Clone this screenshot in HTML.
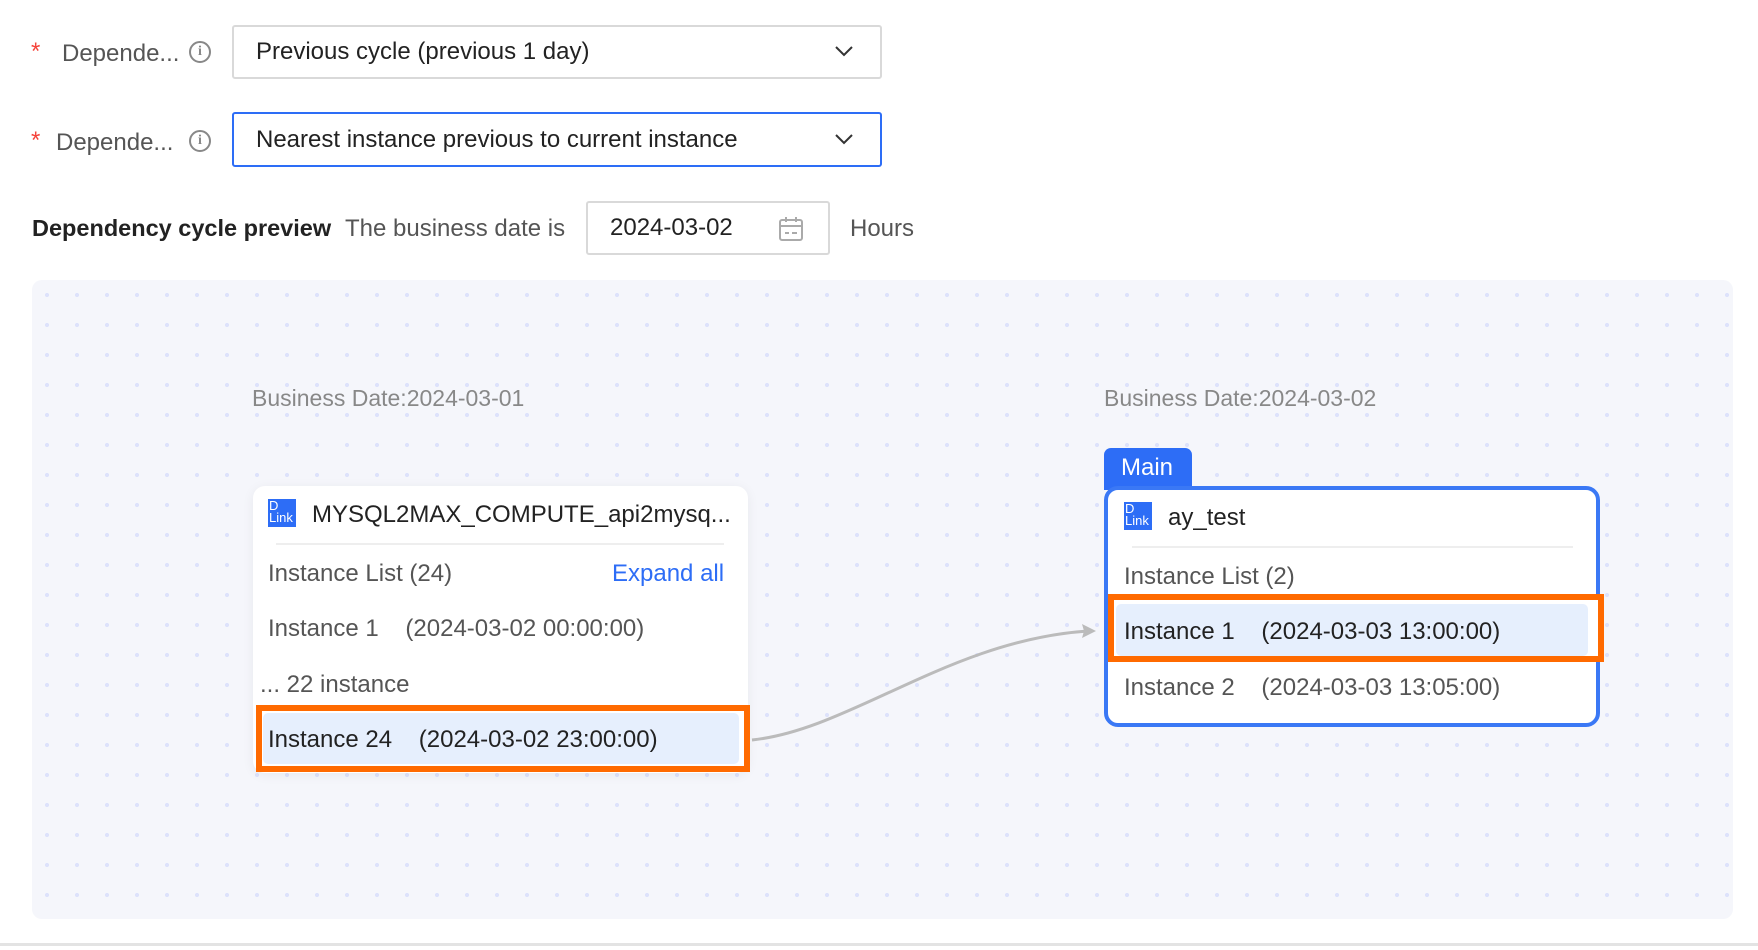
<!DOCTYPE html>
<html><head><meta charset="utf-8"><style>
*{box-sizing:border-box;margin:0;padding:0}
body{width:1758px;height:950px;background:#fff;font-family:"Liberation Sans",Arial,sans-serif;position:relative;overflow:hidden;color:#333}
.a{position:absolute}
.star{color:#f5433a;font-size:24px}
.lbl{font-size:24px;color:#555}
.info{width:22px;height:22px;border:2px solid #888;border-radius:50%;font-size:14px;color:#888;text-align:center;line-height:18px;font-family:"Liberation Serif",serif;font-weight:bold}
.sel{border:2px solid #d9d9d9;border-radius:3px;background:#fff;font-size:24px;color:#222;padding-left:22px;display:flex;align-items:center}
.chev{position:absolute;right:26px;top:50%;margin-top:-8px}
.canvas{left:32px;top:280px;width:1701px;height:639px;border-radius:10px;background-color:#f5f6fb;background-image:radial-gradient(circle,#dde2fb 2px,transparent 2.2px);background-size:30px 30px;background-position:0px 0px}
.bd{font-size:23px;color:#888}
.card{background:#fff;border-radius:12px;box-shadow:0 2px 12px rgba(0,0,0,.06)}
.logo{width:28px;height:28px;background:#2d6df6;color:#fff;font-size:13px;line-height:12px;padding:1px 1px}
.t{font-size:24px;color:#555;position:absolute}
.t2{font-size:24px;color:#222;position:absolute}
</style></head><body>
<div class="a star" style="left:31px;top:38px">*</div>
<div class="a lbl" style="left:62px;top:40px">Depende...</div>
<div class="a info" style="left:189px;top:41px">i</div>
<div class="a sel" style="left:232px;top:25px;width:650px;height:54px">Previous cycle (previous 1 day)
<svg class="chev" width="20" height="14" viewBox="0 0 20 14"><path d="M2 3l8 8 8-8" fill="none" stroke="#333" stroke-width="2"/></svg></div>
<div class="a star" style="left:31px;top:127px">*</div>
<div class="a lbl" style="left:56px;top:129px">Depende...</div>
<div class="a info" style="left:189px;top:130px">i</div>
<div class="a sel" style="left:232px;top:112px;width:650px;height:55px;border-color:#2d6df6">Nearest instance previous to current instance
<svg class="chev" width="20" height="14" viewBox="0 0 20 14"><path d="M2 3l8 8 8-8" fill="none" stroke="#333" stroke-width="2"/></svg></div>
<div class="a" style="left:32px;top:215px;font-size:23.5px;font-weight:bold;color:#222">Dependency cycle preview</div>
<div class="a lbl" style="left:345px;top:215px">The business date is</div>
<div class="a sel" style="left:586px;top:201px;width:244px;height:54px;padding-left:22px">2024-03-02
<svg class="a" style="right:24px;top:13px" width="26" height="26" viewBox="0 0 26 26"><rect x="2" y="4" width="22" height="20" rx="2" fill="none" stroke="#aaa" stroke-width="2"/><path d="M2 10h22M8 1v5M18 1v5M7 17h4M14 17h5" stroke="#aaa" stroke-width="2"/></svg></div>
<div class="a lbl" style="left:850px;top:215px">Hours</div>
<div class="a" style="left:0;top:943px;width:1758px;height:3px;background:#e3e3e3"></div>

<div class="a canvas"></div>
<div class="a bd" style="left:252px;top:385px">Business Date:2024-03-01</div>
<div class="a bd" style="left:1104px;top:385px">Business Date:2024-03-02</div>

<svg class="a" style="left:0;top:0" width="1758" height="950"><path d="M752 740 C 850 730, 950 640, 1088 631" fill="none" stroke="#bbb" stroke-width="3"/><path d="M1096 631 l-14 -7 l2 7 l-2 7z" fill="#bbb"/></svg>

<div class="a card" style="left:253px;top:486px;width:495px;height:287px"></div>
<div class="a logo" style="left:268px;top:499px">D<br>Link</div>
<div class="t2" style="left:312px;top:501px">MYSQL2MAX_COMPUTE_api2mysq...</div>
<div class="a" style="left:276px;top:543px;width:448px;height:2px;background:#eee"></div>
<div class="t" style="left:268px;top:560px">Instance List (24)</div>
<div class="a" style="left:612px;top:560px;font-size:24px;color:#2d6df6">Expand all</div>
<div class="t" style="left:268px;top:615px">Instance 1&nbsp;&nbsp;&nbsp;&nbsp;(2024-03-02 00:00:00)</div>
<div class="t" style="left:260px;top:671px">... 22 instance</div>
<div class="a" style="left:256px;top:705px;width:494px;height:67px;border:6px solid #ff6a00;background:#fff"><div style="position:absolute;left:1px;top:2px;right:5px;bottom:2px;background:#e6effd;border-radius:5px"></div></div>
<div class="t2" style="left:268px;top:726px">Instance 24&nbsp;&nbsp;&nbsp;&nbsp;(2024-03-02 23:00:00)</div>

<div class="a" style="left:1104px;top:448px;width:88px;height:42px;background:#2d6df6;border-radius:7px 7px 0 0;color:#fff;font-size:24px;padding:6px 0 0 17px">Main</div>
<div class="a" style="left:1104px;top:486px;width:496px;height:241px;border:4px solid #3a78f5;border-radius:14px;background:#fff"></div>
<div class="a logo" style="left:1124px;top:502px">D<br>Link</div>
<div class="t2" style="left:1168px;top:504px">ay_test</div>
<div class="a" style="left:1132px;top:546px;width:441px;height:2px;background:#eee"></div>
<div class="t" style="left:1124px;top:563px">Instance List (2)</div>
<div class="a" style="left:1108px;top:594px;width:496px;height:68px;border:6px solid #ff6a00;background:#fff"><div style="position:absolute;left:2px;top:4px;right:10px;bottom:0;background:#e6effd;border-radius:5px"></div></div>
<div class="t2" style="left:1124px;top:618px">Instance 1&nbsp;&nbsp;&nbsp;&nbsp;(2024-03-03 13:00:00)</div>
<div class="t" style="left:1124px;top:674px">Instance 2&nbsp;&nbsp;&nbsp;&nbsp;(2024-03-03 13:05:00)</div>
</body></html>
